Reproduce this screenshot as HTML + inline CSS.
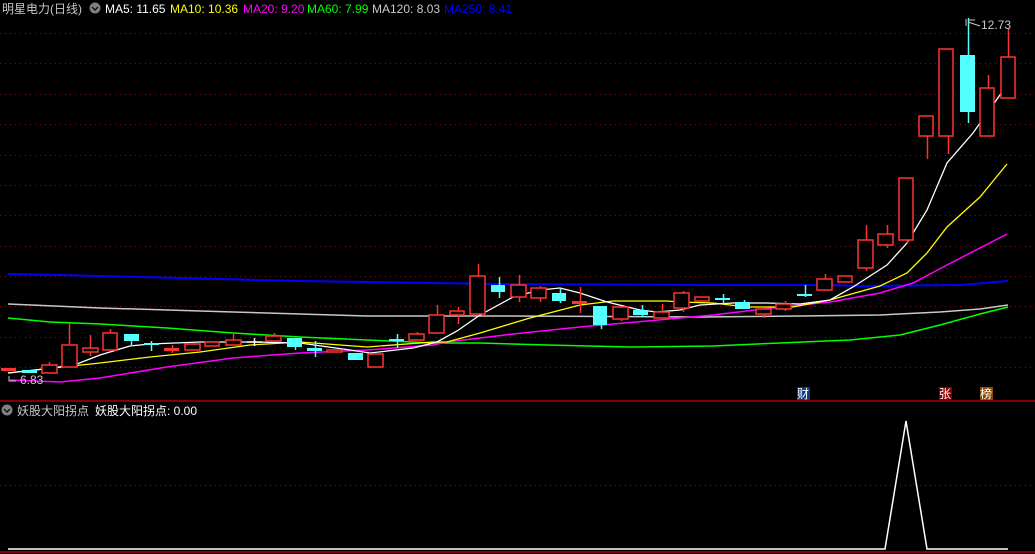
<!DOCTYPE html>
<html><head><meta charset="utf-8"><style>
html,body{margin:0;padding:0;background:#000;}
body{width:1035px;height:554px;overflow:hidden;}
svg{display:block;}
text{font-family:"Liberation Sans","Noto Sans CJK SC",sans-serif;}
</style></head><body>
<svg width="1035" height="554" viewBox="0 0 1035 554" xmlns="http://www.w3.org/2000/svg">
<rect width="1035" height="554" fill="#000"/>
<g stroke="#8a1010" stroke-width="1" stroke-dasharray="1,4">
<line x1="0" y1="33.5" x2="1035" y2="33.5"/><line x1="0" y1="63.5" x2="1035" y2="63.5"/>
<line x1="0" y1="94.5" x2="1035" y2="94.5"/><line x1="0" y1="124.5" x2="1035" y2="124.5"/>
<line x1="0" y1="155.5" x2="1035" y2="155.5"/><line x1="0" y1="185.5" x2="1035" y2="185.5"/>
<line x1="0" y1="215.5" x2="1035" y2="215.5"/><line x1="0" y1="246.5" x2="1035" y2="246.5"/>
<line x1="0" y1="276.5" x2="1035" y2="276.5"/><line x1="0" y1="306.5" x2="1035" y2="306.5"/>
<line x1="0" y1="337.5" x2="1035" y2="337.5"/><line x1="0" y1="367.5" x2="1035" y2="367.5"/>
<line x1="0" y1="485.5" x2="1035" y2="485.5"/>
</g>
<line x1="0" y1="401" x2="1035" y2="401" stroke="#b00000" stroke-width="1.5"/>
<line x1="0" y1="552" x2="1035" y2="552" stroke="#b00000" stroke-width="1.5"/>

<g fill="none" stroke-width="1.3">
<polyline stroke="#0000ff" stroke-width="2" points="8,274 60,275 140,277 300,281 500,284 700,285 830,285 860,286 960,285 1008,281"/>
<polyline stroke="#c8c8c8" stroke-width="1.5" points="8,304 100,308 233,312 367,316 500,316 700,317 800,316 880,315 940,312 980,309 1008,305"/>
<polyline stroke="#00ff00" stroke-width="1.5" points="8,318 50,322 100,324 167,328 233,333 300,337 367,340 433,343 480,343 547,345 630,347 713,346 780,343 850,340 900,335 940,325 980,314 1008,307"/>
<polyline stroke="#ff00ff" stroke-width="1.5" points="10,380 60,382 100,378 167,367 233,358 300,353 367,350 433,345 447,342 513,334 580,327 647,321 713,315 763,309 800,305 830,302 880,293 913,283 947,265 980,248 1007,234"/>
<polyline stroke="#ffff00" points="8,373 53,368 100,363 150,357 200,352 250,345 300,342 367,347 433,342 447,342 480,333 530,318 580,305 613,301 667,301 680,302 713,303 747,307 793,307 830,300 880,286 907,273 927,253 947,227 980,197 1007,164"/>
<polyline stroke="#ffffff" points="8,373 53,368 77,364 100,355 130,346 150,344 200,342 253,342 300,343 350,350 370,353 413,348 437,342 457,331 480,315 513,297 540,290 560,288 580,293 607,302 640,310 657,312 680,310 700,305 733,303 767,303 800,304 830,300 853,287 887,265 907,243 927,210 947,163 973,133 1007,85"/>
</g>

<g stroke-width="1.5">
<g stroke="#ff3232">
<line x1="49.5" y1="362" x2="49.5" y2="365"/><line x1="69.5" y1="323" x2="69.5" y2="345"/>
<line x1="90.5" y1="335" x2="90.5" y2="356"/><line x1="110.5" y1="329" x2="110.5" y2="333"/>
<line x1="172.5" y1="345" x2="172.5" y2="353"/><line x1="233.5" y1="333" x2="233.5" y2="340"/>
<line x1="274.5" y1="333" x2="274.5" y2="336"/>
<line x1="417.5" y1="332" x2="417.5" y2="334"/><line x1="437.5" y1="305" x2="437.5" y2="315"/>
<line x1="458.5" y1="307" x2="458.5" y2="324"/><line x1="478.5" y1="264" x2="478.5" y2="276"/>
<line x1="519.5" y1="275" x2="519.5" y2="302"/><line x1="540.5" y1="286" x2="540.5" y2="302"/>
<line x1="580.5" y1="287" x2="580.5" y2="313"/><line x1="621.5" y1="319" x2="621.5" y2="321"/>
<line x1="662.5" y1="304" x2="662.5" y2="312"/><line x1="683.5" y1="291" x2="683.5" y2="312"/>
<line x1="764.5" y1="314" x2="764.5" y2="318"/><line x1="785.5" y1="301" x2="785.5" y2="311"/>
<line x1="825.5" y1="274" x2="825.5" y2="279"/><line x1="866.5" y1="225" x2="866.5" y2="271"/>
<line x1="887.5" y1="225" x2="887.5" y2="248"/><line x1="907.5" y1="240" x2="907.5" y2="243"/>
<line x1="927.5" y1="136" x2="927.5" y2="159"/><line x1="948.5" y1="136" x2="948.5" y2="154"/>
<line x1="988.5" y1="75" x2="988.5" y2="88"/><line x1="1008.5" y1="28" x2="1008.5" y2="57"/>
</g>
<g stroke="#54ffff">
<line x1="131.5" y1="341" x2="131.5" y2="345"/><line x1="151.5" y1="341" x2="151.5" y2="351"/>
<line x1="295.5" y1="347" x2="295.5" y2="350"/><line x1="315.5" y1="341" x2="315.5" y2="357"/>
<line x1="397.5" y1="334" x2="397.5" y2="348"/><line x1="499.5" y1="277" x2="499.5" y2="298"/>
<line x1="560.5" y1="289" x2="560.5" y2="303"/><line x1="601.5" y1="325" x2="601.5" y2="329"/>
<line x1="642.5" y1="305" x2="642.5" y2="317"/><line x1="723.5" y1="294" x2="723.5" y2="304"/>
<line x1="744.5" y1="300" x2="744.5" y2="302"/><line x1="805.5" y1="285" x2="805.5" y2="297"/>
<line x1="968.5" y1="18" x2="968.5" y2="123"/>
</g>
<line x1="254.5" y1="338" x2="254.5" y2="346" stroke="#fff"/>
<line x1="247" y1="342" x2="262" y2="342" stroke="#fff"/>
</g>
<g fill="#000" stroke="#ff3232" stroke-width="1.5">
<rect x="42" y="365" width="15" height="8"/><rect x="62" y="345" width="15" height="22"/>
<rect x="83" y="348" width="15" height="4"/><rect x="103" y="333" width="14" height="17"/>
<rect x="185" y="344" width="15" height="6"/><rect x="205" y="342" width="14" height="4"/>
<rect x="226" y="340" width="15" height="5"/><rect x="266" y="336" width="15" height="5"/>
<rect x="327" y="350" width="15" height="2"/><rect x="368" y="354" width="15" height="13"/>
<rect x="409" y="334" width="15" height="6"/><rect x="429" y="315" width="15" height="18"/>
<rect x="450" y="311" width="14" height="4"/><rect x="470" y="276" width="15" height="38"/>
<rect x="511" y="285" width="15" height="12"/><rect x="531" y="288" width="15" height="10"/>
<rect x="613" y="307" width="15" height="12"/><rect x="654" y="312" width="15" height="6"/>
<rect x="674" y="293" width="15" height="15"/><rect x="695" y="297" width="14" height="4"/>
<rect x="756" y="309" width="15" height="5"/><rect x="776" y="304" width="15" height="5"/>
<rect x="817" y="279" width="15" height="11"/><rect x="838" y="276" width="14" height="6"/>
<rect x="858" y="240" width="15" height="28"/><rect x="878" y="234" width="15" height="11"/>
<rect x="899" y="178" width="14" height="62"/><rect x="919" y="116" width="14" height="20"/>
<rect x="939" y="49" width="14" height="87"/><rect x="980" y="88" width="14" height="48"/>
<rect x="1001" y="57" width="14" height="41"/>
</g>
<g fill="#ff3232">
<rect x="1" y="368" width="15" height="3"/><rect x="164" y="348" width="15" height="3"/>
<rect x="572" y="301" width="15" height="3"/>
</g>
<g fill="#54ffff">
<rect x="22" y="370" width="15" height="3"/><rect x="124" y="334" width="15" height="7"/>
<rect x="144" y="343" width="15" height="2"/><rect x="287" y="338" width="15" height="9"/>
<rect x="307" y="348" width="15" height="3"/><rect x="348" y="353" width="15" height="7"/>
<rect x="389" y="339" width="15" height="2"/><rect x="491" y="285" width="14" height="7"/>
<rect x="552" y="293" width="14" height="8"/><rect x="593" y="306" width="14" height="19"/>
<rect x="633" y="310" width="15" height="5"/><rect x="715" y="298" width="15" height="2"/>
<rect x="735" y="302" width="15" height="7"/><rect x="797" y="294" width="15" height="2"/>
<rect x="960" y="55" width="15" height="57"/>
</g>

<g stroke="#c8c8c8" fill="none" stroke-width="1">
<polyline points="968,20 975,20"/><line x1="966" y1="19" x2="966" y2="26"/><polyline points="968,22 980,26"/>
<polyline points="9,376 9,381 16,381"/>
</g>
<text x="981" y="29" fill="#c8c8c8" font-size="12">12.73</text>
<text x="20" y="384" fill="#c8c8c8" font-size="12">6.83</text>

<text x="2" y="13" fill="#c8c8c8" font-size="12">明星电力(日线)</text>
<circle cx="95" cy="8" r="5.5" fill="#808080"/>
<polyline points="92,7 95,10 98,7" fill="none" stroke="#000" stroke-width="1.2"/>
<g font-size="12">
<text x="105" y="13" fill="#ffffff">MA5: 11.65</text>
<text x="170" y="13" fill="#ffff00">MA10: 10.36</text>
<text x="243" y="13" fill="#ff00ff">MA20: 9.20</text>
<text x="307" y="13" fill="#00ff00">MA60: 7.99</text>
<text x="372" y="13" fill="#c8c8c8">MA120: 8.03</text>
<text x="444" y="13" fill="#0000ff">MA250: 8.41</text>
</g>

<rect x="797" y="387" width="13" height="13" fill="#0a3c78"/>
<text x="797" y="398" fill="#fff" font-size="12">财</text>
<rect x="939" y="387" width="13" height="13" fill="#8a0000"/>
<text x="939" y="398" fill="#fff" font-size="12">张</text>
<rect x="980" y="387" width="13" height="13" fill="#8a4a00"/>
<text x="980" y="398" fill="#fff" font-size="12">榜</text>

<circle cx="7" cy="410" r="5.5" fill="#808080"/>
<polyline points="4,409 7,412 10,409" fill="none" stroke="#000" stroke-width="1.2"/>
<text x="17" y="415" fill="#c8c8c8" font-size="12">妖股大阳拐点</text>
<text x="95" y="415" fill="#ffffff" font-size="12">妖股大阳拐点: 0.00</text>
<polyline points="8,549 885,549 906,421 927,549 1008,549" fill="none" stroke="#fff" stroke-width="1.5"/>
</svg>
</body></html>
